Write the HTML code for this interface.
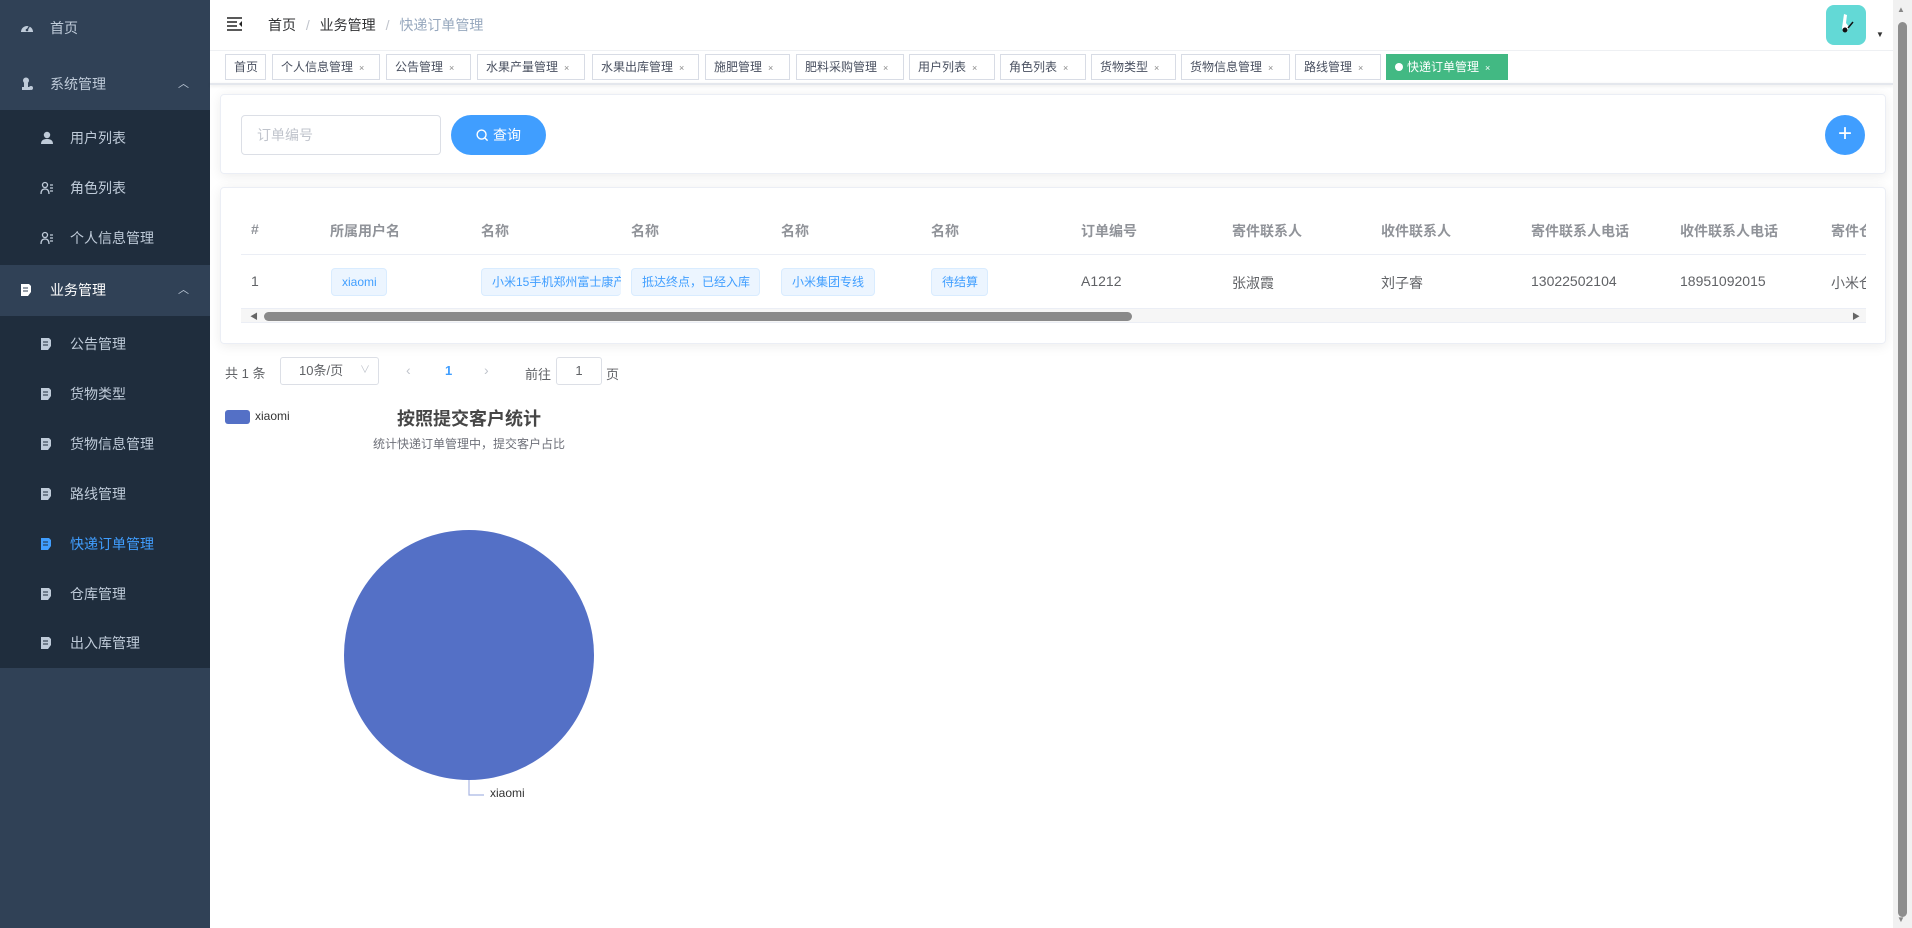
<!DOCTYPE html>
<html><head><meta charset="utf-8">
<style>
*{box-sizing:border-box;margin:0;padding:0}
body{width:1912px;height:928px;overflow:hidden;font-family:"Liberation Sans","Noto Sans CJK SC",sans-serif;background:#fff;position:relative;color:#303133}
.abs{position:absolute}
#side{left:0;top:0;width:210px;height:928px;background:#304156}
.mi{position:absolute;left:0;width:210px;height:50px;line-height:50px;font-size:14px;color:#bfcbd9}
.sub{background:#1f2d3d}
.ic{position:absolute;width:14px;height:14px;top:18px}
.tab{position:absolute;top:54px;height:26px;line-height:24px;border:1px solid #d8dce5;font-size:12px;color:#495060;padding-left:8px;background:#fff}
.tab i{font-style:normal;font-size:9px;color:#888;margin-left:6px}
.th{position:absolute;top:221px;font-size:14px;font-weight:bold;color:#909399}
.td{position:absolute;top:273px;font-size:14px;color:#606266}
.tag{position:absolute;top:268px;height:28px;line-height:26px;border:1px solid #d9ecff;background:#ecf5ff;color:#409eff;font-size:12px;border-radius:4px;padding:0 10px;white-space:nowrap;overflow:hidden}
</style></head><body>
<div id="side" class="abs">
 <div class="mi" style="top:3px"><svg class="ic" style="left:20px" viewBox="0 0 14 14"><path d="M1 11A6 6 0 0 1 13 11Z" fill="#bfcbd9"/><circle cx="7" cy="9" r="1.3" fill="#304156"/><path d="M7 9L9.5 5" stroke="#304156" stroke-width="1.2"/></svg><span style="position:absolute;left:50px">首页</span></div>
 <div class="mi" style="top:59px"><svg class="ic" style="left:20px" viewBox="0 0 14 14"><circle cx="6" cy="3.5" r="3" fill="#bfcbd9"/><path d="M4 6h4v4h2v3H2v-3h2z" fill="#bfcbd9"/><circle cx="11" cy="11" r="2" fill="#bfcbd9"/></svg><span style="position:absolute;left:50px">系统管理</span><span style="position:absolute;left:178px;font-size:11px">︿</span></div>
 <div class="abs sub" style="top:110px;left:0;width:210px;height:155px"></div>
 <div class="mi" style="top:113px"><svg class="ic" style="left:40px" viewBox="0 0 14 14"><circle cx="7" cy="4" r="3.2" fill="#bfcbd9"/><path d="M1 13c0-4 3-5 6-5s6 1 6 5z" fill="#bfcbd9"/></svg><span style="position:absolute;left:70px">用户列表</span></div>
 <div class="mi" style="top:163px"><svg class="ic" style="left:40px" viewBox="0 0 14 14" fill="none" stroke="#bfcbd9" stroke-width="1.3"><circle cx="5" cy="4" r="2.5"/><path d="M1 13c0-4 2-5 4-5s4 1 4 5M10 4h3M10 7h3M10 10h3"/></svg><span style="position:absolute;left:70px">角色列表</span></div>
 <div class="mi" style="top:213px"><svg class="ic" style="left:40px" viewBox="0 0 14 14" fill="none" stroke="#bfcbd9" stroke-width="1.3"><circle cx="5" cy="4" r="2.5"/><path d="M1 13c0-4 2-5 4-5s4 1 4 5M10 4h3M10 7h3M10 10h3"/></svg><span style="position:absolute;left:70px">个人信息管理</span></div>
 <div class="mi" style="top:265px;color:#fff"><svg class="ic" style="left:20px" viewBox="0 0 14 14"><path d="M1 1h8l2 2v6l-3 4H1z" fill="#fff"/><path d="M3 5h5M3 8h5" stroke="#304156"/></svg><span style="position:absolute;left:50px">业务管理</span><span style="position:absolute;left:178px;font-size:11px;color:#bfcbd9">︿</span></div>
 <div class="abs sub" style="top:316px;left:0;width:210px;height:352px"></div>
 <div class="mi" style="top:319px"><svg class="ic" style="left:40px" viewBox="0 0 14 14"><path d="M1 1h8l2 2v6l-3 4H1z" fill="#bfcbd9"/><path d="M3 5h5M3 8h5" stroke="#1f2d3d"/></svg><span style="position:absolute;left:70px">公告管理</span></div>
 <div class="mi" style="top:369px"><svg class="ic" style="left:40px" viewBox="0 0 14 14"><path d="M1 1h8l2 2v6l-3 4H1z" fill="#bfcbd9"/><path d="M3 5h5M3 8h5" stroke="#1f2d3d"/></svg><span style="position:absolute;left:70px">货物类型</span></div>
 <div class="mi" style="top:419px"><svg class="ic" style="left:40px" viewBox="0 0 14 14"><path d="M1 1h8l2 2v6l-3 4H1z" fill="#bfcbd9"/><path d="M3 5h5M3 8h5" stroke="#1f2d3d"/></svg><span style="position:absolute;left:70px">货物信息管理</span></div>
 <div class="mi" style="top:469px"><svg class="ic" style="left:40px" viewBox="0 0 14 14"><path d="M1 1h8l2 2v6l-3 4H1z" fill="#bfcbd9"/><path d="M3 5h5M3 8h5" stroke="#1f2d3d"/></svg><span style="position:absolute;left:70px">路线管理</span></div>
 <div class="mi" style="top:519px;color:#409eff"><svg class="ic" style="left:40px" viewBox="0 0 14 14"><path d="M1 1h8l2 2v6l-3 4H1z" fill="#409eff"/><path d="M3 5h5M3 8h5" stroke="#1f2d3d"/></svg><span style="position:absolute;left:70px">快递订单管理</span></div>
 <div class="mi" style="top:569px"><svg class="ic" style="left:40px" viewBox="0 0 14 14"><path d="M1 1h8l2 2v6l-3 4H1z" fill="#bfcbd9"/><path d="M3 5h5M3 8h5" stroke="#1f2d3d"/></svg><span style="position:absolute;left:70px">仓库管理</span></div>
 <div class="mi" style="top:618px"><svg class="ic" style="left:40px" viewBox="0 0 14 14"><path d="M1 1h8l2 2v6l-3 4H1z" fill="#bfcbd9"/><path d="M3 5h5M3 8h5" stroke="#1f2d3d"/></svg><span style="position:absolute;left:70px">出入库管理</span></div>
</div>

<!-- header -->
<svg class="abs" style="left:227px;top:17px" width="16" height="14" viewBox="0 0 16 14"><path d="M0 1h15M0 5h10M0 9h10M0 13h15" stroke="#222" stroke-width="1.6"/><path d="M15 4v6l-3-3z" fill="#222"/></svg>
<div class="abs" style="left:268px;top:15px;font-size:14px;color:#303133">首页 <span style="color:#c0c4cc;margin:0 6px">/</span> 业务管理 <span style="color:#c0c4cc;margin:0 6px">/</span> <span style="color:#97a8be">快递订单管理</span></div>
<div class="abs" style="left:1826px;top:5px;width:40px;height:40px;border-radius:8px;background:#63d9d6"></div>
<svg class="abs" style="left:1836px;top:12px" width="20" height="26" viewBox="0 0 20 26"><path d="M8 2l3 1-1 8 3 4-2 5H7l-1-4z" fill="#fff"/><circle cx="9" cy="18" r="2.5" fill="#111"/><path d="M12 16l5-6" stroke="#111" stroke-width="1.5"/></svg>
<div class="abs" style="left:1876px;top:30px;font-size:8px;color:#333">▼</div>
<div class="abs" style="left:210px;top:50px;width:1683px;height:1px;background:#eef0f3"></div>
<div class="abs" style="left:210px;top:83px;width:1683px;height:2px;background:#e4e7ed;box-shadow:0 1px 3px rgba(0,0,0,.1)"></div>

<div class="tab" style="left:225px;width:41px">首页</div>
<div class="tab" style="left:272px;width:108px">个人信息管理<i>×</i></div>
<div class="tab" style="left:386px;width:85px">公告管理<i>×</i></div>
<div class="tab" style="left:477px;width:108px">水果产量管理<i>×</i></div>
<div class="tab" style="left:592px;width:107px">水果出库管理<i>×</i></div>
<div class="tab" style="left:705px;width:85px">施肥管理<i>×</i></div>
<div class="tab" style="left:796px;width:108px">肥料采购管理<i>×</i></div>
<div class="tab" style="left:909px;width:86px">用户列表<i>×</i></div>
<div class="tab" style="left:1000px;width:86px">角色列表<i>×</i></div>
<div class="tab" style="left:1091px;width:85px">货物类型<i>×</i></div>
<div class="tab" style="left:1181px;width:109px">货物信息管理<i>×</i></div>
<div class="tab" style="left:1295px;width:86px">路线管理<i>×</i></div>
<div class="tab" style="left:1386px;width:122px;background:#42b983;border-color:#42b983;color:#fff"><span style="display:inline-block;width:8px;height:8px;border-radius:50%;background:#fff;margin-right:4px"></span>快递订单管理<i style="color:#fff">×</i></div>

<!-- search card -->
<div class="abs" style="left:220px;top:94px;width:1666px;height:80px;border:1px solid #ebeef5;border-radius:4px;box-shadow:0 2px 12px rgba(0,0,0,.08)"></div>
<div class="abs" style="left:241px;top:115px;width:200px;height:40px;border:1px solid #dcdfe6;border-radius:4px;font-size:14px;color:#c0c4cc;line-height:38px;padding-left:15px">订单编号</div>
<div class="abs" style="left:451px;top:115px;width:95px;height:40px;border-radius:20px;background:#409eff;color:#fff;font-size:14px;line-height:40px;text-align:center"><svg width="13" height="13" viewBox="0 0 14 14" style="vertical-align:-2px;margin-right:4px"><circle cx="6" cy="6" r="4.8" fill="none" stroke="#fff" stroke-width="1.5"/><path d="M9.5 9.5l3 3" stroke="#fff" stroke-width="1.5"/></svg>查询</div>
<div class="abs" style="left:1825px;top:115px;width:40px;height:40px;border-radius:50%;background:#409eff;color:#fff;font-size:24px;line-height:38px;text-align:center;font-weight:300">+</div>

<!-- table card -->
<div class="abs" style="left:220px;top:187px;width:1666px;height:157px;border:1px solid #ebeef5;border-radius:4px;box-shadow:0 2px 12px rgba(0,0,0,.08)"></div>
<div class="abs" style="left:241px;top:187px;width:1631px;height:157px;overflow:hidden">
</div>
<div class="th" style="left:251px">#</div>
<div class="th" style="left:330px">所属用户名</div>
<div class="th" style="left:481px">名称</div>
<div class="th" style="left:631px">名称</div>
<div class="th" style="left:781px">名称</div>
<div class="th" style="left:931px">名称</div>
<div class="th" style="left:1081px">订单编号</div>
<div class="th" style="left:1232px">寄件联系人</div>
<div class="th" style="left:1381px">收件联系人</div>
<div class="th" style="left:1531px">寄件联系人电话</div>
<div class="th" style="left:1680px">收件联系人电话</div>
<div class="abs" style="left:1831px;top:221px;width:35px;overflow:hidden;white-space:nowrap;font-size:14px;font-weight:bold;color:#909399">寄件仓库</div>
<div class="abs" style="left:241px;top:254px;width:1625px;height:1px;background:#ebeef5"></div>
<div class="td" style="left:251px">1</div>
<div class="tag" style="left:331px;width:56px">xiaomi</div>
<div class="tag" style="left:481px;width:140px;border-right:none">小米15手机郑州富士康产</div>
<div class="tag" style="left:631px;width:129px">抵达终点，已经入库</div>
<div class="tag" style="left:781px;width:94px">小米集团专线</div>
<div class="tag" style="left:931px;width:57px">待结算</div>
<div class="td" style="left:1081px">A1212</div>
<div class="td" style="left:1232px">张淑霞</div>
<div class="td" style="left:1381px">刘子睿</div>
<div class="td" style="left:1531px">13022502104</div>
<div class="td" style="left:1680px">18951092015</div>
<div class="abs" style="left:1831px;top:273px;width:35px;overflow:hidden;white-space:nowrap;font-size:14px;color:#606266">小米仓库</div>
<div class="abs" style="left:241px;top:308px;width:1625px;height:15px;background:#f6f6f6;border-top:1px solid #ebeef5;border-bottom:1px solid #ebeef5"></div>
<div class="abs" style="left:250px;top:311px;font-size:8px;color:#666">◀</div>
<div class="abs" style="left:1852px;top:311px;font-size:8px;color:#666">▶</div>
<div class="abs" style="left:264px;top:312px;width:868px;height:9px;border-radius:5px;background:#8a8a8a"></div>

<!-- pagination -->
<div class="abs" style="left:225px;top:363px;font-size:13px;color:#606266">共 1 条</div>
<div class="abs" style="left:280px;top:357px;width:99px;height:28px;border:1px solid #dcdfe6;border-radius:3px;font-size:13px;color:#606266;line-height:26px;padding-left:18px">10条/页<span style="position:absolute;right:8px;color:#c0c4cc;font-size:10px">∨</span></div>
<div class="abs" style="left:406px;top:362px;font-size:14px;color:#c0c4cc">‹</div>
<div class="abs" style="left:445px;top:363px;font-size:13px;color:#409eff;font-weight:bold">1</div>
<div class="abs" style="left:484px;top:362px;font-size:14px;color:#c0c4cc">›</div>
<div class="abs" style="left:525px;top:364px;font-size:13px;color:#606266">前往</div>
<div class="abs" style="left:556px;top:357px;width:46px;height:28px;border:1px solid #dcdfe6;border-radius:3px;font-size:13px;color:#606266;line-height:26px;text-align:center">1</div>
<div class="abs" style="left:606px;top:364px;font-size:13px;color:#606266">页</div>

<!-- chart -->
<div class="abs" style="left:225px;top:410px;width:25px;height:14px;border-radius:3px;background:#5470c6"></div>
<div class="abs" style="left:255px;top:409px;font-size:12px;color:#333">xiaomi</div>
<div class="abs" style="left:319px;top:405px;width:300px;text-align:center;font-size:18px;font-weight:bold;color:#464646">按照提交客户统计</div>
<div class="abs" style="left:319px;top:435px;width:300px;text-align:center;font-size:12px;color:#6e7079">统计快递订单管理中，提交客户占比</div>
<svg class="abs" style="left:340px;top:525px" width="260" height="290"><circle cx="129" cy="130" r="125" fill="#5470c6"/><path d="M129 255v15h15" fill="none" stroke="#a9b6e3" stroke-width="1.2"/></svg>
<div class="abs" style="left:490px;top:786px;font-size:12px;color:#333">xiaomi</div>

<!-- page scrollbar -->
<div class="abs" style="left:1893px;top:0;width:19px;height:928px;background:#f1f1f1"></div>
<div class="abs" style="left:1898px;top:22px;width:9px;height:895px;border-radius:5px;background:#8d8d8d"></div>
<div class="abs" style="left:1897px;top:5px;font-size:8px;color:#888">▲</div>
<div class="abs" style="left:1897px;top:915px;font-size:8px;color:#888">▼</div>
</body></html>
